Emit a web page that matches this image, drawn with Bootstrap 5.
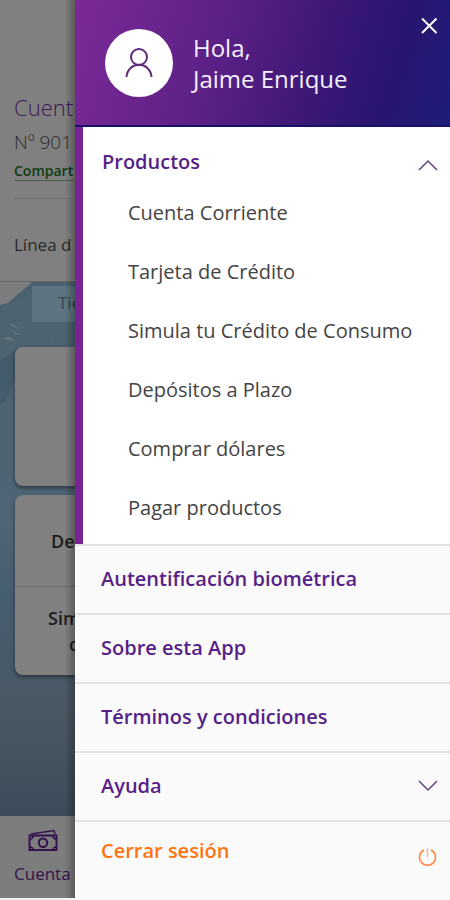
<!DOCTYPE html>
<html lang="es">
<head>
<meta charset="utf-8">
<meta name="viewport" content="width=device-width, initial-scale=1">
<title>Menú</title>
<link href="https://cdn.jsdelivr.net/npm/bootstrap@5.3.0/dist/css/bootstrap.min.css" rel="stylesheet">
<style>
  body { font-family: "Open Sans", "Noto Sans", sans-serif; background: #fafafa; font-size: 20px; line-height: 28px; }
  a, a:hover { color: inherit; text-decoration: none; }
  svg { display: block; flex: none; }

  /* dimmed account screen */
  .screen { background: #808080; color: #2b2b2b; border-bottom: 2px solid #f4f4f4; position: relative; }
  .screen::after { content: ""; position: absolute; top: 0; right: 0; bottom: 0; width: 10px; background: linear-gradient(to right, transparent, rgba(0,0,0,.28)); pointer-events: none; }
  .account { padding: 92px 0 0 14px; height: 282px; border-bottom: 1px solid #666; }
  .account-name { font-size: 22px; font-weight: 300; color: #3d1857; line-height: 30px; }
  .account-num { font-size: 19px; font-weight: 300; line-height: 28px; margin-top: 6px; }
  .share { font-size: 14px; font-weight: 600; color: #0c3d10; line-height: 18px; margin-top: 6px; border-bottom: 1px solid #4c5f4d; }
  .credit { margin-top: 17px; padding-top: 32px; border-top: 1px solid #737373; font-size: 17px; line-height: 28px; }
  .scene { background: linear-gradient(#4b6170, #4f6575 45%, #465d70 60%, #4a5864 80%, #3c4c5a); position: relative; }
  .sky { position: absolute; left: 0; top: 0; width: 100%; }
  .shop { position: relative; background: #5d7580; color: #36454d; font-size: 17px; height: 36px; margin: 4px 0 25px 32px; padding: 3px 0 0 26px; }
  .tile { position: relative; background: #808080; border-radius: 8px 0 0 8px; margin-left: 15px; box-shadow: 0 2px 4px rgba(0,0,0,.45); color: #1b1b1b; font-size: 18px; line-height: 26px; font-weight: 600; }
  .tile-tall { height: 139px; margin-bottom: 9px; }
  .tile-row { display: block; height: 92px; padding: 33px 0 0 36px; border-bottom: 1px solid #707070; }
  .tile-row + .tile-row { height: 88px; padding: 18px 0 0 33px; border: 0; }
  .tile-row span { display: block; padding-left: 21px; }
  .bottom-tab { background: #7d7d7d; color: #34124d; height: 82px; padding-top: 13px; font-size: 17px; }
  .bottom-tab svg { margin: 0 0 9px 28px; }
  .bottom-tab span { display: block; padding-left: 14px; line-height: 26px; }

  /* drawer */
  .drawer { background: #fafafa; color: #571f87; }
  .drawer-head { background: linear-gradient(105deg, #7b2a97 0%, #5c2086 38%, #3b1776 65%, #281570 83%, #1e1d79 100%); padding: 0 11px 0 30px; height: 127px; border-bottom: 2px solid #171168; color: #f5f0ff; font-size: 24px; line-height: 31px; }
  .avatar { width: 68px; height: 68px; background: #fff; flex: none; }
  .plain { border: 0; background: none; padding: 0; color: inherit; }
  .close-x { padding: 16px 0 0; }
  .group { background: #fff; border-left: 8px solid #792494; padding-bottom: 7px; }
  .heading { height: 56px; padding: 14px 12px 0 19px; font-weight: 600; }
  .heading span { padding-top: 7px; }
  .entry { display: flex; align-items: center; height: 59px; padding-left: 45px; color: #444; }
  .option { display: flex; align-items: center; justify-content: space-between; width: 100%; height: 69px; padding: 0 12px 2px 26px; border: 0; border-top: 2px solid #e3e3e3; background: #fafafa; color: inherit; font-weight: 600; text-align: left; }
  .exit { height: 79px; padding: 15px 13px 0 26px; color: #ff7411; align-items: flex-start; }
</style>
<script src="https://cdn.jsdelivr.net/npm/bootstrap@5.3.0/dist/js/bootstrap.bundle.min.js"></script>
</head>
<body>
<div class="row g-0 min-vh-100">
  <main class="screen col-2 d-flex flex-column overflow-hidden">
    <section class="account text-nowrap">
      <div class="account-name">Cuent</div>
      <div class="account-num">Nº 901</div>
      <a class="share d-block" href="#">Compart</a>
      <div class="credit">Línea d</div>
    </section>
    <section class="scene flex-grow-1 text-nowrap">
      <svg class="sky" height="200" viewBox="0 0 75 200" preserveAspectRatio="none" aria-hidden="true">
        <path d="M0 0H32L23 8 17 13 8 21 0 23Z" fill="#7b7d7e"/>
        <path d="M0 27L18 16 32 8V38H75V64H16V100L0 130Z" fill="#4d6370"/>
        <path d="M0 78L15 68V96L5 120 0 122Z" fill="#445b6c"/>
        <path d="M8 40l6 3 6 4-6-2zm3 7l6 4 5 2-7-1zM2 56l7-1 6 4-7-1zM48 51l4 6 2 4-3-5z" fill="#6a767c"/>
      </svg>
      <div class="shop">Tie</div>
      <div class="tile tile-tall"></div>
      <div class="tile">
        <a class="tile-row" href="#">De</a>
        <a class="tile-row" href="#">Sim<span>c</span></a>
      </div>
    </section>
    <a class="bottom-tab d-block text-nowrap" href="#">
      <svg width="30" height="23" viewBox="0 0 30 23" fill="none" stroke="#34124d" stroke-width="2" aria-hidden="true">
        <path d="M1.500 6.500H28.500V21H1.500Z"/><path d="M3 5L26 1.500 27 5" stroke-width="1.500"/><circle cx="15" cy="13.800" r="4.200"/>
        <path d="M2 10Q5 10 5 7M25 7Q25 10 28 10M2 18Q5 18 5 21M25 21Q25 18 28 18" stroke-width="1.500"/>
      </svg>
      <span>Cuenta</span>
    </a>
  </main>

  <nav class="drawer col-10 d-flex flex-column" aria-label="Menú principal">
    <header class="drawer-head d-flex">
      <div class="avatar rounded-circle d-flex align-items-center justify-content-center align-self-center">
        <svg width="28" height="30" viewBox="0 0 28 30" fill="none" stroke="#5f2a7c" stroke-width="2" aria-hidden="true"><circle cx="14" cy="9" r="8"/><path d="M1.500 29C2.500 12.800 25.500 12.800 26.500 29"/></svg>
      </div>
      <div class="align-self-center ps-3 ms-1 flex-grow-1">Hola,<br>Jaime Enrique</div>
      <button class="plain close-x align-self-start" type="button" aria-label="Cerrar">
        <svg width="20" height="20" viewBox="0 0 20 20" stroke="#fff" stroke-width="2"><path d="M3 2.500L17.500 17M17.500 2.500L3 17"/></svg>
      </button>
    </header>

    <section class="group">
      <button class="plain heading w-100 d-flex justify-content-between text-start" type="button" aria-expanded="true">
        <span>Productos</span>
        <svg class="mt-3" width="20" height="16" viewBox="0 0 20 16" fill="none" stroke="#68427f" stroke-width="1.500"><path d="M1 13L10 4 19 13"/></svg>
      </button>
      <a class="entry" href="#">Cuenta Corriente</a>
      <a class="entry" href="#">Tarjeta de Crédito</a>
      <a class="entry" href="#">Simula tu Crédito de Consumo</a>
      <a class="entry" href="#">Depósitos a Plazo</a>
      <a class="entry" href="#">Comprar dólares</a>
      <a class="entry" href="#">Pagar productos</a>
    </section>

    <a class="option" href="#">Autentificación biométrica</a>
    <a class="option" href="#">Sobre esta App</a>
    <a class="option" href="#">Términos y condiciones</a>
    <button class="option" type="button" aria-expanded="false">Ayuda
      <svg width="20" height="12" viewBox="0 0 20 12" fill="none" stroke="#68427f" stroke-width="1.500"><path d="M1 1L10 10 19 1"/></svg>
    </button>
    <button class="option exit flex-grow-1" type="button">Cerrar sesión
      <svg class="mt-2" width="19" height="22" viewBox="0 0 19 22" fill="none" stroke="#ff8540" stroke-width="1.500"><path d="M6 5A8 8 0 1 0 13 5"/><path d="M9.500 3V12" stroke="#ffb4a0"/></svg>
    </button>
  </nav>
</div>
</body>
</html>
